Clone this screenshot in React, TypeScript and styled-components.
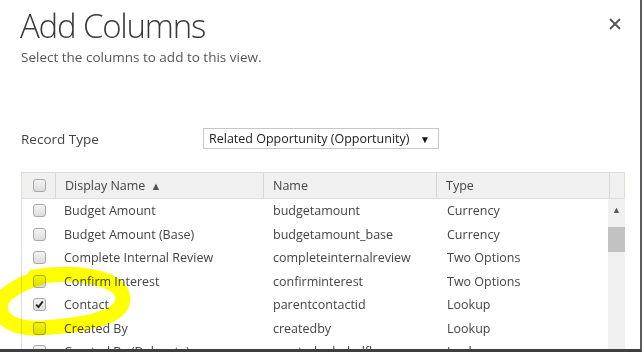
import React from "react";
import { createGlobalStyle, styled } from "styled-components";

const GlobalStyle = createGlobalStyle`
  html, body {
    margin: 0;
    padding: 0;
    background: #ffffff;
  }
  body {
    font-family: "Open Sans", "Noto Sans", "Liberation Sans", sans-serif;
    color: #444;
  }
`;

interface Column {
  display: string;
  name: string;
  type: string;
  checked?: boolean;
}

const columns: Column[] = [
  { display: "Budget Amount", name: "budgetamount", type: "Currency" },
  { display: "Budget Amount (Base)", name: "budgetamount_base", type: "Currency" },
  { display: "Complete Internal Review", name: "completeinternalreview", type: "Two Options" },
  { display: "Confirm Interest", name: "confirminterest", type: "Two Options" },
  { display: "Contact", name: "parentcontactid", type: "Lookup", checked: true },
  { display: "Created By", name: "createdby", type: "Lookup" },
  { display: "Created By (Delegate)", name: "createdonbehalfby", type: "Lookup" },
];

const Window = styled.div`
  position: relative;
  box-sizing: border-box;
  width: 642px;
  height: 352px;
  padding: 0 17px 0 21px;
  border-right: 2px solid #5c5c5c;
  border-bottom: 3px solid #3f3f3f;
  overflow: hidden;
  background: #fff;
`;

const TitleRow = styled.div`
  display: flex;
  justify-content: space-between;
  align-items: flex-start;
`;

const Title = styled.h1`
  margin: 4px 0 0 -1px;
  font-weight: 300;
  font-size: 33px;
  line-height: 44px;
  color: #3a3a3a;
  letter-spacing: -1.2px;
`;

const CloseButton = styled.div`
  display: flex;
  margin: 18px 2px 0 0;
  color: #555;
`;

const Subtitle = styled.p`
  margin: 0;
  font-size: 13.5px;
  line-height: 18px;
  color: #555;
`;

const RecordRow = styled.div`
  display: flex;
  align-items: center;
  margin-top: 62px;
`;

const Label = styled.span`
  width: 182px;
  font-size: 13.5px;
  color: #444;
`;

const Select = styled.div`
  box-sizing: border-box;
  display: flex;
  align-items: center;
  justify-content: space-between;
  width: 236px;
  height: 21px;
  padding: 0 8px 0 5px;
  border: 1px solid #c6c6c6;
  font-size: 12.5px;
  color: #222;
`;

const Arrow = styled.span`
  font-size: 10px;
  color: #111;
`;

const Grid = styled.div`
  margin-top: 23px;
  width: 604px;
`;

const HeaderRow = styled.div`
  box-sizing: border-box;
  display: flex;
  height: 27px;
  background: #f0f0f0;
  border: 1px solid #deded4;
`;

const HeaderCell = styled.div<{ $width: number; $divider?: boolean }>`
  box-sizing: border-box;
  display: flex;
  align-items: center;
  gap: 5px;
  width: ${({ $width }) => $width}px;
  padding-left: ${({ $divider }) => ($divider ? 9 : 11)}px;
  border-left: ${({ $divider }) => ($divider ? "1px solid #d6d6d6" : "none")};
  font-size: 12.5px;
  color: #444;
`;

const SortArrow = styled.span`
  font-size: 11px;
  color: #555;
`;

const Body = styled.div`
  display: flex;
  height: 160px;
  border-left: 1px solid #dcdcdc;
  border-right: 1px solid #dcdcdc;
`;

const Rows = styled.div`
  flex: 1;
`;

const Row = styled.div`
  display: flex;
  align-items: center;
  height: 23.5px;
`;

const Cell = styled.div<{ $width: number; $pad?: number }>`
  box-sizing: border-box;
  width: ${({ $width }) => $width}px;
  padding-left: ${({ $pad }) => $pad ?? 10}px;
  white-space: nowrap;
  overflow: hidden;
  font-size: 12.5px;
  color: #444;
`;

const CheckBox = styled.span`
  box-sizing: border-box;
  display: flex;
  align-items: center;
  justify-content: center;
  width: 13px;
  height: 13px;
  border: 1px solid #a8a8a8;
  border-radius: 3px;
  background: linear-gradient(#f4f4f4, #dcdcdc);
`;

const Scrollbar = styled.div`
  display: flex;
  flex-direction: column;
  align-items: center;
  width: 17px;
  background: #f0f0f0;
`;

const ScrollUp = styled.div`
  display: flex;
  align-items: center;
  justify-content: center;
  height: 20px;
  font-size: 9px;
  color: #555;
`;

const Thumb = styled.div`
  width: 17px;
  height: 25px;
  margin-top: 8px;
  background: #c2c2c2;
`;

const Highlight = styled.svg`
  position: absolute;
  left: 0;
  top: 0;
  pointer-events: none;
  mix-blend-mode: multiply;
`;

const Check = () => (
  <svg width="9" height="9" viewBox="0 0 9 9">
    <path d="M1.2 4.6 L3.5 7 L7.8 1.4" fill="none" stroke="#222" strokeWidth="1.8" />
  </svg>
);

const App: React.FC = () => {
  return (
    <>
      <GlobalStyle />
      <Window>
        <TitleRow>
          <Title>Add Columns</Title>
          <CloseButton>
            <svg width="12" height="12" viewBox="0 0 12 12">
              <path d="M1 1 L11 11 M11 1 L1 11" stroke="#555" strokeWidth="1.8" />
            </svg>
          </CloseButton>
        </TitleRow>
        <Subtitle>Select the columns to add to this view.</Subtitle>

        <RecordRow>
          <Label>Record Type</Label>
          <Select>
            <span>Related Opportunity (Opportunity)</span>
            <Arrow>▼</Arrow>
          </Select>
        </RecordRow>

        <Grid>
          <HeaderRow>
            <HeaderCell $width={33}>
              <CheckBox />
            </HeaderCell>
            <HeaderCell $width={208} $divider>
              Display Name <SortArrow>▲</SortArrow>
            </HeaderCell>
            <HeaderCell $width={173} $divider>Name</HeaderCell>
            <HeaderCell $width={173} $divider>Type</HeaderCell>
            <HeaderCell $width={15} $divider />
          </HeaderRow>
          <Body>
            <Rows>
              {columns.map((col) => (
                <Row key={col.name}>
                  <Cell $width={33} $pad={11}>
                    <CheckBox>{col.checked && <Check />}</CheckBox>
                  </Cell>
                  <Cell $width={208} $pad={9}>{col.display}</Cell>
                  <Cell $width={173} $pad={10}>{col.name}</Cell>
                  <Cell $width={172} $pad={11}>{col.type}</Cell>
                </Row>
              ))}
            </Rows>
            <Scrollbar>
              <ScrollUp>▲</ScrollUp>
              <Thumb />
            </Scrollbar>
          </Body>
        </Grid>

        <Highlight width="150" height="354" viewBox="0 0 150 354">
          <path
            d="M34 277 C72 270 116 277 122 294 C128 311 104 321 72 325 C47 328 26 331 11 323 C-3 315 -2 301 8 293 C16 287 26 281 40 278"
            fill="none"
            stroke="#ffff00"
            strokeWidth="15"
            strokeLinecap="round"
          />
        </Highlight>
      </Window>
    </>
  );
};

export default App;
